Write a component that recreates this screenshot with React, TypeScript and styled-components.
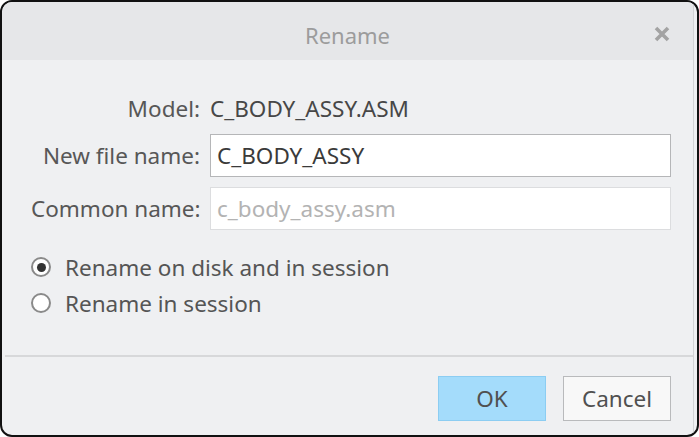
import React, {useState} from "react";
import styled, {createGlobalStyle} from "styled-components";

const GlobalStyle = createGlobalStyle`
  html, body {
    margin: 0;
    padding: 0;
    background: #ffffff;
  }
  body {
    font-family: "Noto Sans", "Open Sans", sans-serif;
  }
`;

const Frame = styled.div`
  box-sizing: border-box;
  width: 699px;
  height: 437px;
  border: 2px solid #111111;
  border-radius: 12px;
  background: #eff0f2;
  overflow: hidden;
  display: flex;
  padding-right: 3px;
`;

const Dialog = styled.div`
  flex: 1;
  display: flex;
  flex-direction: column;
  border-right: 1px solid #d2d3d5;
`;

const TitleBar = styled.div`
  box-sizing: border-box;
  height: 58px;
  padding-top: 8px;
  background: #e6e7e9;
  display: flex;
  align-items: center;
  justify-content: center;
  position: relative;
  color: #9c9c9c;
  font-size: 22px;
`;

const CloseButton = styled.span`
  position: absolute;
  right: 23px;
  top: 24px;
  width: 16px;
  height: 16px;
  display: flex;
`;

const Body = styled.div`
  display: flex;
  flex-direction: column;
  padding: 33px 22px 0 29px;
`;

const Form = styled.div`
  display: grid;
  grid-template-columns: 169px 1fr;
  column-gap: 10px;
  row-gap: 10px;
  align-items: center;
`;

const Label = styled.span`
  text-align: right;
  font-size: 22.5px;
  color: #575757;
  white-space: nowrap;
`;

const Value = styled.span`
  font-size: 22.5px;
  color: #474747;
  height: 30px;
  line-height: 30px;
`;

const Input = styled.input`
  box-sizing: border-box;
  width: 100%;
  height: 43px;
  padding: 0 6px;
  font-family: inherit;
  font-size: 22.5px;
  background: #ffffff;
  border: 1px solid #b5b6b8;
  color: #3a3a3a;
  outline: none;
  &:disabled {
    border-color: #dcdddf;
  }
  &::placeholder {
    color: #b3b3b3;
  }
`;

const Options = styled.div`
  display: flex;
  flex-direction: column;
  gap: 10px;
  margin-top: 24px;
`;

const RadioRow = styled.label`
  display: flex;
  align-items: center;
  gap: 14px;
  font-size: 22.5px;
  color: #555555;
  height: 26px;
  cursor: pointer;
`;

const RadioCircle = styled.span<{checked: boolean}>`
  box-sizing: border-box;
  width: 20px;
  height: 20px;
  border-radius: 50%;
  border: 2px solid #8a8a8a;
  background: #ffffff;
  display: flex;
  align-items: center;
  justify-content: center;
  &::after {
    content: "";
    width: 9px;
    height: 9px;
    border-radius: 50%;
    background: ${(p) => (p.checked ? "#333333" : "transparent")};
  }
`;

const Divider = styled.div`
  height: 2px;
  background: #d7d8da;
  margin: 39px 0 0 3px;
`;

const Footer = styled.div`
  display: flex;
  justify-content: flex-end;
  gap: 17px;
  padding: 19px 22px 0 0;
`;

const Button = styled.button<{primary?: boolean}>`
  box-sizing: border-box;
  width: 108px;
  height: 45px;
  font-family: inherit;
  font-size: 22.5px;
  color: #505050;
  background: ${(p) => (p.primary ? "#a4dcfb" : "#f8f8f8")};
  border: 1px solid ${(p) => (p.primary ? "#8ccdf2" : "#b9babc")};
  cursor: pointer;
`;

export default function App() {
  const [mode, setMode] = useState<"disk" | "session">("disk");
  const [name, setName] = useState("C_BODY_ASSY");

  return (
    <>
      <GlobalStyle />
      <Frame>
        <Dialog>
          <TitleBar>
            Rename
            <CloseButton>
              <svg width="16" height="16" viewBox="0 0 16 16">
                <path d="M2 2 L14 14 M14 2 L2 14" stroke="#a3a3a3" strokeWidth="3.6" />
              </svg>
            </CloseButton>
          </TitleBar>
          <Body>
            <Form>
              <Label>Model:</Label>
              <Value>C_BODY_ASSY.ASM</Value>
              <Label>New file name:</Label>
              <Input value={name} onChange={(e) => setName(e.target.value)} />
              <Label>Common name:</Label>
              <Input disabled placeholder="c_body_assy.asm" />
            </Form>
            <Options>
              <RadioRow onClick={() => setMode("disk")}>
                <RadioCircle checked={mode === "disk"} />
                Rename on disk and in session
              </RadioRow>
              <RadioRow onClick={() => setMode("session")}>
                <RadioCircle checked={mode === "session"} />
                Rename in session
              </RadioRow>
            </Options>
          </Body>
          <Divider />
          <Footer>
            <Button primary>OK</Button>
            <Button>Cancel</Button>
          </Footer>
        </Dialog>
      </Frame>
    </>
  );
}
